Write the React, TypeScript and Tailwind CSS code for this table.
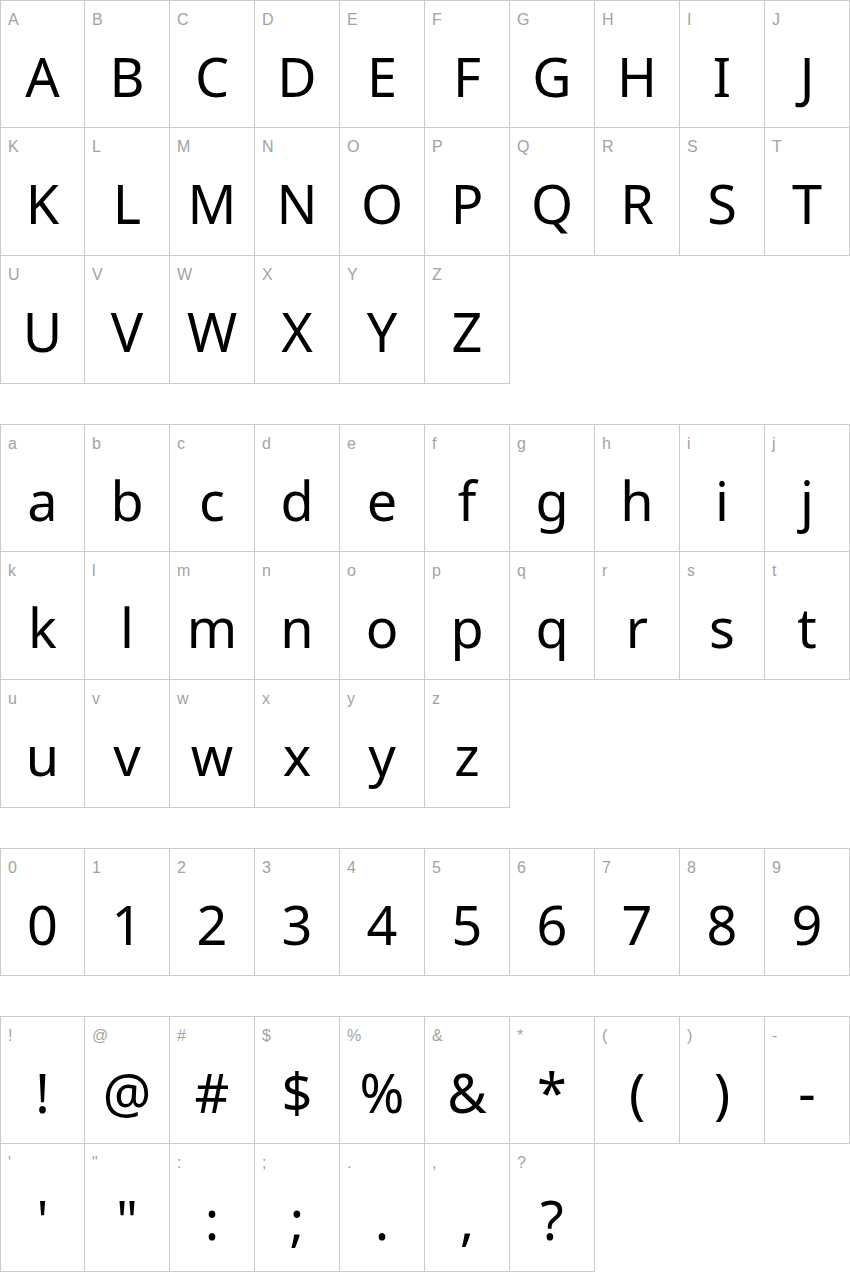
import React from "react";

const blocks: string[][] = [
  "ABCDEFGHIJKLMNOPQRSTUVWXYZ".split(""),
  "abcdefghijklmnopqrstuvwxyz".split(""),
  "0123456789".split(""),
  ["!", "@", "#", "$", "%", "&", "*", "(", ")", "-", "'", '"', ":", ";", ".", ",", "?"],
];

function Cell({ ch, first, top }: { ch: string; first: boolean; top: boolean }) {
  return (
    <div
      className={
        "w-[85px] h-[128px] border-r border-b border-[#cccccc] flex flex-col " +
        (first ? "border-l " : "") +
        (top ? "border-t" : "")
      }
    >
      <div
        className="pl-[7px] pt-[11px] h-[27px] text-[16px] leading-[16px] text-[#a3a3a3]"
        style={{ fontFamily: '"Liberation Sans", Arial, sans-serif' }}
      >
        {ch}
      </div>
      <div
        className="mt-[21px] text-center text-[54px] leading-[54px] text-black"
        style={{ fontFamily: '"Noto Sans", sans-serif' }}
      >
        {ch}
      </div>
    </div>
  );
}

function Block({ chars }: { chars: string[] }) {
  const rows: string[][] = [];
  for (let i = 0; i < chars.length; i += 10) rows.push(chars.slice(i, i + 10));
  return (
    <div className="flex flex-col">
      {rows.map((r, ri) => (
        <div key={ri} className="flex">
          {r.map((c, ci) => (
            <Cell key={ci} ch={c} first={ci === 0} top={ri === 0} />
          ))}
        </div>
      ))}
    </div>
  );
}

export default function App() {
  return (
    <div className="w-[850px] bg-white flex flex-col gap-[40px]">
      {blocks.map((b, i) => (
        <Block key={i} chars={b} />
      ))}
    </div>
  );
}
